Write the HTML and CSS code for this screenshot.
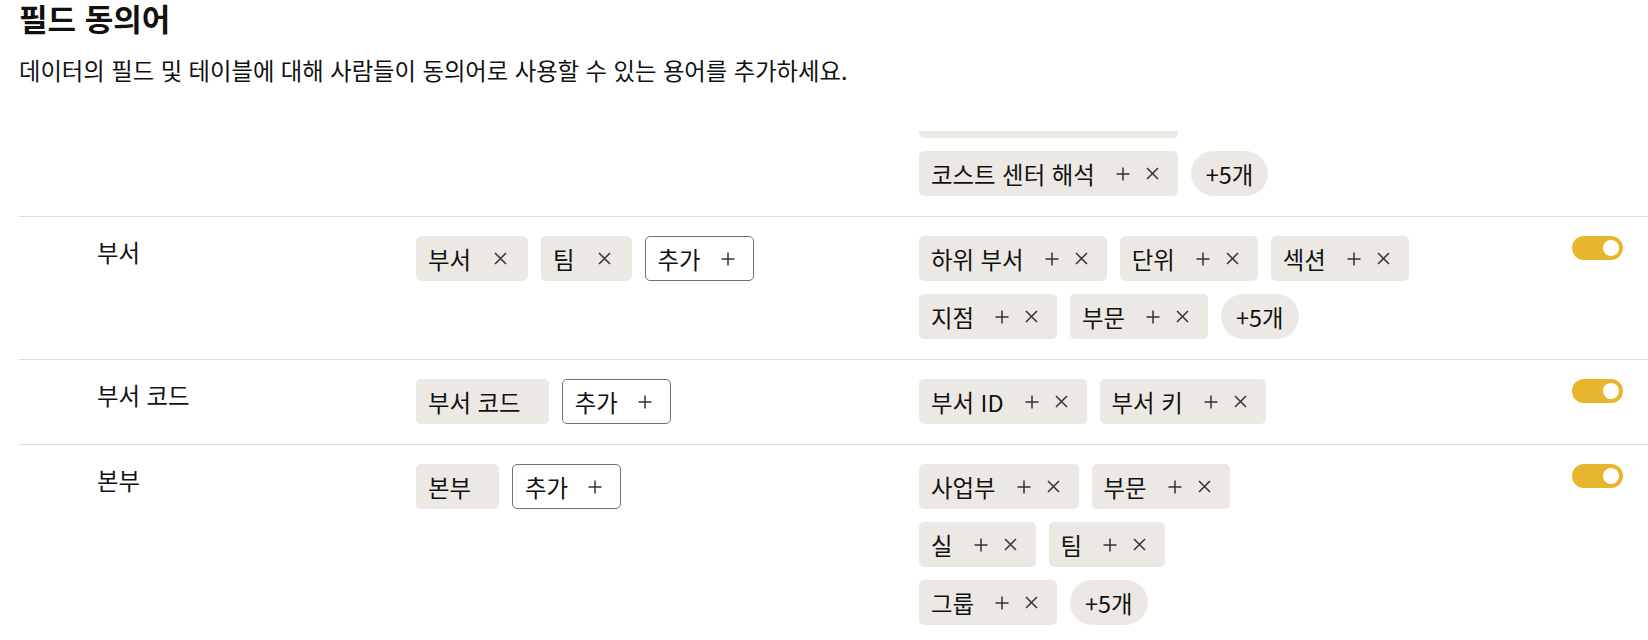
FILE: index.html
```html
<!DOCTYPE html>
<html lang="ko">
<head>
<meta charset="utf-8">
<title>필드 동의어</title>
<link rel="stylesheet" href="styles.css">
</head>
<body>
<header class="page-head">
  <h1 class="title">필드 동의어</h1>
  <p class="desc">데이터의 필드 및 테이블에 대해 사람들이 동의어로 사용할 수 있는 용어를 추가하세요.</p>
</header>
<div class="viewport">
  <div class="table">
    <div class="row">
      <div class="label"></div>
      <div class="chips"></div>
      <div class="suggest">
        <div class="line">
          <span class="chip sug">코스트 센터 코드<svg class="ico plus" viewBox="0 0 14 14" width="14" height="14"><path d="M7 0.5v13M0.5 7h13"/></svg><svg class="ico x" viewBox="0 0 13 13" width="13" height="13"><path d="M1 1l11 11M12 1L1 12"/></svg></span>
        </div>
        <div class="line">
          <span class="chip sug">코스트 센터 해석<svg class="ico plus" viewBox="0 0 14 14" width="14" height="14"><path d="M7 0.5v13M0.5 7h13"/></svg><svg class="ico x" viewBox="0 0 13 13" width="13" height="13"><path d="M1 1l11 11M12 1L1 12"/></svg></span>
          <span class="more">+5개</span>
        </div>
      </div>
      <div></div>
    </div>

    <div class="row">
      <div class="label">부서</div>
      <div class="chips">
        <span class="chip own">부서<svg class="ico x" viewBox="0 0 13 13" width="13" height="13"><path d="M1 1l11 11M12 1L1 12"/></svg></span>
        <span class="chip own">팀<svg class="ico x" viewBox="0 0 13 13" width="13" height="13"><path d="M1 1l11 11M12 1L1 12"/></svg></span>
        <button class="add">추가<svg class="ico plus" viewBox="0 0 14 14" width="14" height="14"><path d="M7 0.5v13M0.5 7h13"/></svg></button>
      </div>
      <div class="suggest">
        <div class="line">
          <span class="chip sug">하위 부서<svg class="ico plus" viewBox="0 0 14 14" width="14" height="14"><path d="M7 0.5v13M0.5 7h13"/></svg><svg class="ico x" viewBox="0 0 13 13" width="13" height="13"><path d="M1 1l11 11M12 1L1 12"/></svg></span>
          <span class="chip sug">단위<svg class="ico plus" viewBox="0 0 14 14" width="14" height="14"><path d="M7 0.5v13M0.5 7h13"/></svg><svg class="ico x" viewBox="0 0 13 13" width="13" height="13"><path d="M1 1l11 11M12 1L1 12"/></svg></span>
          <span class="chip sug">섹션<svg class="ico plus" viewBox="0 0 14 14" width="14" height="14"><path d="M7 0.5v13M0.5 7h13"/></svg><svg class="ico x" viewBox="0 0 13 13" width="13" height="13"><path d="M1 1l11 11M12 1L1 12"/></svg></span>
        </div>
        <div class="line">
          <span class="chip sug">지점<svg class="ico plus" viewBox="0 0 14 14" width="14" height="14"><path d="M7 0.5v13M0.5 7h13"/></svg><svg class="ico x" viewBox="0 0 13 13" width="13" height="13"><path d="M1 1l11 11M12 1L1 12"/></svg></span>
          <span class="chip sug">부문<svg class="ico plus" viewBox="0 0 14 14" width="14" height="14"><path d="M7 0.5v13M0.5 7h13"/></svg><svg class="ico x" viewBox="0 0 13 13" width="13" height="13"><path d="M1 1l11 11M12 1L1 12"/></svg></span>
          <span class="more">+5개</span>
        </div>
      </div>
      <div class="toggle"><span class="knob"></span></div>
    </div>

    <div class="row">
      <div class="label">부서 코드</div>
      <div class="chips">
        <span class="chip plain">부서 코드</span>
        <button class="add">추가<svg class="ico plus" viewBox="0 0 14 14" width="14" height="14"><path d="M7 0.5v13M0.5 7h13"/></svg></button>
      </div>
      <div class="suggest">
        <div class="line">
          <span class="chip sug">부서 ID<svg class="ico plus" viewBox="0 0 14 14" width="14" height="14"><path d="M7 0.5v13M0.5 7h13"/></svg><svg class="ico x" viewBox="0 0 13 13" width="13" height="13"><path d="M1 1l11 11M12 1L1 12"/></svg></span>
          <span class="chip sug">부서 키<svg class="ico plus" viewBox="0 0 14 14" width="14" height="14"><path d="M7 0.5v13M0.5 7h13"/></svg><svg class="ico x" viewBox="0 0 13 13" width="13" height="13"><path d="M1 1l11 11M12 1L1 12"/></svg></span>
        </div>
      </div>
      <div class="toggle"><span class="knob"></span></div>
    </div>

    <div class="row">
      <div class="label">본부</div>
      <div class="chips">
        <span class="chip plain">본부</span>
        <button class="add">추가<svg class="ico plus" viewBox="0 0 14 14" width="14" height="14"><path d="M7 0.5v13M0.5 7h13"/></svg></button>
      </div>
      <div class="suggest">
        <div class="line">
          <span class="chip sug">사업부<svg class="ico plus" viewBox="0 0 14 14" width="14" height="14"><path d="M7 0.5v13M0.5 7h13"/></svg><svg class="ico x" viewBox="0 0 13 13" width="13" height="13"><path d="M1 1l11 11M12 1L1 12"/></svg></span>
          <span class="chip sug">부문<svg class="ico plus" viewBox="0 0 14 14" width="14" height="14"><path d="M7 0.5v13M0.5 7h13"/></svg><svg class="ico x" viewBox="0 0 13 13" width="13" height="13"><path d="M1 1l11 11M12 1L1 12"/></svg></span>
        </div>
        <div class="line">
          <span class="chip sug">실<svg class="ico plus" viewBox="0 0 14 14" width="14" height="14"><path d="M7 0.5v13M0.5 7h13"/></svg><svg class="ico x" viewBox="0 0 13 13" width="13" height="13"><path d="M1 1l11 11M12 1L1 12"/></svg></span>
          <span class="chip sug">팀<svg class="ico plus" viewBox="0 0 14 14" width="14" height="14"><path d="M7 0.5v13M0.5 7h13"/></svg><svg class="ico x" viewBox="0 0 13 13" width="13" height="13"><path d="M1 1l11 11M12 1L1 12"/></svg></span>
        </div>
        <div class="line">
          <span class="chip sug">그룹<svg class="ico plus" viewBox="0 0 14 14" width="14" height="14"><path d="M7 0.5v13M0.5 7h13"/></svg><svg class="ico x" viewBox="0 0 13 13" width="13" height="13"><path d="M1 1l11 11M12 1L1 12"/></svg></span>
          <span class="more">+5개</span>
        </div>
      </div>
      <div class="toggle"><span class="knob"></span></div>
    </div>
  </div>
</div>
</body>
</html>
```

FILE: styles.css
```css
* { box-sizing: border-box; }

html, body { margin: 0; }

body {
  height: 100vh;
  display: flex;
  flex-direction: column;
  padding-left: 19px;
  overflow: hidden;
  background: #ffffff;
  color: #111111;
  font-family: "Noto Sans CJK KR", "Noto Sans", sans-serif;
  font-weight: 400;
}

.page-head { flex: none; }

.title {
  margin: 0;
  font-size: 31px;
  line-height: 36px;
  font-weight: 600;
}

.desc {
  margin: 18px 0 0;
  font-size: 23.3px;
  line-height: 33px;
}

.viewport {
  flex: 1;
  min-height: 0;
  overflow: hidden;
  margin-top: 44px;
}

/* content is scrolled: the first row is partly above the visible area */
.table { margin-top: -57px; }

.row {
  display: grid;
  grid-template-columns: 319px 503px 1fr 51px;
  align-items: start;
  padding: 19px 25px 20px 78px;
  border-bottom: 1px solid #dcdcdc;
}

.label {
  font-size: 23.4px;
  line-height: 33px;
}

.chips {
  display: flex;
  flex-wrap: wrap;
  gap: 13px;
}

.suggest {
  display: flex;
  flex-direction: column;
  gap: 13px;
}

.line {
  display: flex;
  gap: 13px;
}

.chip {
  display: inline-flex;
  align-items: center;
  height: 45px;
  padding: 0 21px 0 12px;
  background: #ece9e4;
  border-radius: 5px;
  font-size: 23.4px;
  white-space: nowrap;
}

.chip.plain { padding-right: 28px; }

.chip.own .x { margin-left: 23px; }

.chip.sug { padding-right: 19px; }
.chip.sug .plus { margin-left: 21px; }
.chip.sug .x { margin-left: 16px; }

.ico {
  flex: none;
  fill: none;
  stroke: #333333;
  stroke-width: 1.5;
}

.add {
  display: inline-flex;
  align-items: center;
  height: 45px;
  padding: 0 18px 0 12px;
  border: 1px solid #727272;
  border-radius: 5px;
  background: #ffffff;
  color: inherit;
  font-family: inherit;
  font-weight: inherit;
  font-size: 23.4px;
  white-space: nowrap;
}

.add .plus { margin-left: 20px; }

.more {
  display: inline-flex;
  align-items: center;
  height: 45px;
  padding: 0 15px;
  border-radius: 23px;
  background: #ece9e4;
  font-size: 23.4px;
  white-space: nowrap;
}

.toggle {
  display: flex;
  align-items: center;
  justify-content: flex-end;
  width: 51px;
  height: 24px;
  padding: 0 4px;
  border-radius: 12px;
  background: #e7b62e;
}

.knob {
  width: 16px;
  height: 16px;
  border-radius: 50%;
  background: #ffffff;
}
```
